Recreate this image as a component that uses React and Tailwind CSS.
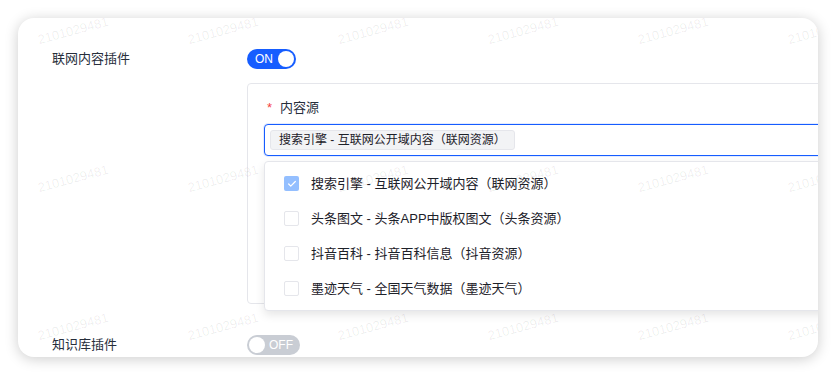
import { Check } from 'lucide-react';

const sources = [
    { label: '搜索引擎 - 互联网公开域内容（联网资源）', checked: true },
    { label: '头条图文 - 头条APP中版权图文（头条资源）', checked: false },
    { label: '抖音百科 - 抖音百科信息（抖音资源）', checked: false },
    { label: '墨迹天气 - 全国天气数据（墨迹天气）', checked: false },
];

const marks = Array.from({ length: 18 });

function Toggle({ on }) {
    if (on) {
        return (
            <div className="flex items-center justify-between h-[20px] w-[49px] rounded-full bg-[#165dff] pl-[8px] pr-[2px]">
                <span className="text-[12px] leading-none text-white">ON</span>
                <span className="h-[16px] w-[16px] rounded-full bg-white" />
            </div>
        );
    }
    return (
        <div className="flex items-center justify-between h-[20px] w-[53px] rounded-full bg-[#c9cdd4] pl-[2px] pr-[7px]">
            <span className="h-[16px] w-[16px] rounded-full bg-white" />
            <span className="text-[12px] leading-none text-white">OFF</span>
        </div>
    );
}

export default function App() {
    return (
        <div className="min-h-screen bg-white p-[18px] font-['Liberation_Sans','Noto_Sans_CJK_SC',sans-serif] text-[#1d2129]">
            <div className="relative h-[339px] w-[800px] overflow-hidden rounded-[16px] bg-white pl-[34px] pt-[31px] shadow-[0_2px_14px_rgba(0,0,0,0.2)]">
                {/* 联网内容插件 */}
                <div className="flex h-[20px] items-center">
                    <div className="w-[195px] text-[13px] text-[#272e3b]">联网内容插件</div>
                    <Toggle on />
                </div>

                <div className="relative ml-[195px] mt-[14px] h-[221px] w-[700px] rounded-[4px] border border-[#e5e6eb] bg-white pl-[16px] pt-[14px]">
                    <div className="flex h-[20px] items-center pl-[3px] text-[13px]">
                        <span className="mr-[8px] text-[#f53f3f]">*</span>
                        <span className="text-[#272e3b]">内容源</span>
                    </div>
                    <div className="mt-[6px] flex h-[32px] w-[620px] items-center rounded-[4px] border border-[#165dff] bg-white pl-[5px] shadow-[0_0_0_1px_rgba(22,93,255,0.12)]">
                        <span className="flex h-[20px] items-center rounded-[3px] border border-[#e5e6eb] bg-[#f2f3f5] px-[8px] text-[12px]">
                            搜索引擎 - 互联网公开域内容（联网资源）
                        </span>
                    </div>

                    {/* dropdown */}
                    <div className="absolute left-[16px] top-[77px] z-10 w-[620px] rounded-[4px] border border-[#e5e6eb] bg-white py-[4px] shadow-[0_4px_10px_rgba(0,0,0,0.1)]">
                        {sources.map((s) => (
                            <div key={s.label} className="flex h-[35px] items-center gap-[12px] pl-[19px] text-[13px]">
                                {s.checked ? (
                                    <span className="flex h-[15px] w-[15px] items-center justify-center rounded-[2px] bg-[#94bfff]">
                                        <Check className="h-[10px] w-[10px] text-white" strokeWidth={3} />
                                    </span>
                                ) : (
                                    <span className="h-[15px] w-[15px] rounded-[2px] border border-[#e5e6eb] bg-white" />
                                )}
                                <span>{s.label}</span>
                            </div>
                        ))}
                    </div>
                </div>

                {/* 知识库插件 */}
                <div className="mt-[31px] flex h-[20px] items-center">
                    <div className="w-[195px] text-[13px] text-[#272e3b]">知识库插件</div>
                    <Toggle on={false} />
                </div>

                {/* watermark */}
                <div className="pointer-events-none absolute left-[-20px] top-[-61px] z-20 grid grid-cols-[repeat(6,150px)] grid-rows-[repeat(3,148px)]">
                    {marks.map((_, i) => (
                        <div key={i} className="flex items-center justify-center">
                            <span className="-rotate-[15deg] text-[13px] text-black/[0.07]">2101029481</span>
                        </div>
                    ))}
                </div>
            </div>
        </div>
    );
}
